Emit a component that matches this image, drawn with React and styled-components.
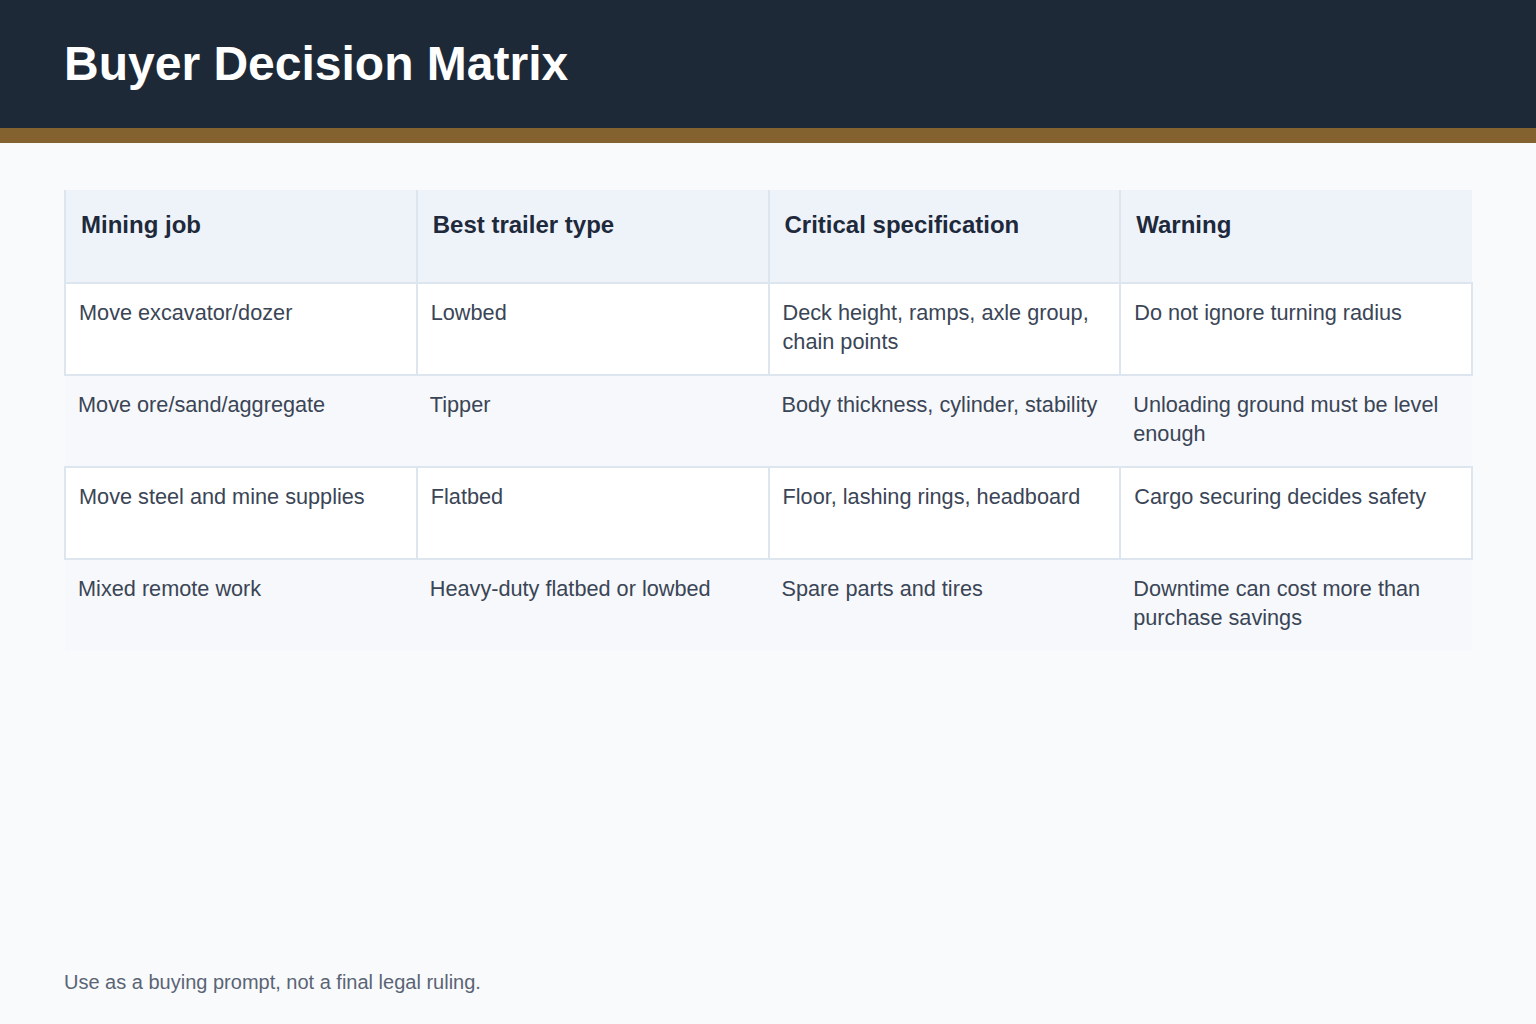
import React from "react";
import styled, { createGlobalStyle } from "styled-components";

const GlobalStyle = createGlobalStyle`
  html, body {
    margin: 0;
    padding: 0;
    background: #f8fafc;
    font-family: "Liberation Sans", Arial, sans-serif;
  }
`;

const Page = styled.div`
  width: 1536px;
  height: 1024px;
  display: flex;
  flex-direction: column;
  background: #f8fafc;
  box-sizing: border-box;
`;

const Header = styled.header`
  height: 128px;
  background: #1e2938;
  display: flex;
  align-items: center;
  padding: 0 64px;
  border-bottom: 15px solid #83622f;
`;

const Title = styled.h1`
  margin: 0;
  font-size: 48px;
  font-weight: 700;
  color: #ffffff;
  line-height: 1;
`;

const Main = styled.main`
  flex: 1;
  display: flex;
  flex-direction: column;
  justify-content: space-between;
  padding: 47px 64px 30px;
`;

const Table = styled.table`
  width: 1409px;
  table-layout: fixed;
  border-collapse: collapse;
`;

const HeadCell = styled.th`
  height: 93px;
  box-sizing: border-box;
  padding: 20px 15px 14px;
  text-align: left;
  vertical-align: top;
  background: #eef3fa;
  border: 2px solid #dde5ef;
  border-top: none;
  color: #1e293b;
  font-size: 24px;
  font-weight: 700;
  line-height: 30px;
  &:last-child {
    border-right: none;
  }
`;

const Row = styled.tr`
  background: ${(p) => (p.$alt ? "#f6f8fb" : "#ffffff")};
`;

const Cell = styled.td`
  height: 92px;
  box-sizing: border-box;
  padding: 14px 13px;
  vertical-align: top;
  color: #3a4556;
  font-size: 21.7px;
  line-height: 29px;
  border: ${(p) => (p.$alt ? "none" : "2px solid #dde5ef")};
`;

const Note = styled.p`
  margin: 0;
  font-size: 20px;
  color: #5b6475;
`;

const columns = ["Mining job", "Best trailer type", "Critical specification", "Warning"];

const rows = [
  ["Move excavator/dozer", "Lowbed", "Deck height, ramps, axle group, chain points", "Do not ignore turning radius"],
  ["Move ore/sand/aggregate", "Tipper", "Body thickness, cylinder, stability", "Unloading ground must be level enough"],
  ["Move steel and mine supplies", "Flatbed", "Floor, lashing rings, headboard", "Cargo securing decides safety"],
  ["Mixed remote work", "Heavy-duty flatbed or lowbed", "Spare parts and tires", "Downtime can cost more than purchase savings"],
];

export default function App() {
  return (
    <>
      <GlobalStyle />
      <Page>
        <Header>
          <Title>Buyer Decision Matrix</Title>
        </Header>
        <Main>
          <Table>
            <thead>
              <tr>
                {columns.map((c) => (
                  <HeadCell key={c}>{c}</HeadCell>
                ))}
              </tr>
            </thead>
            <tbody>
              {rows.map((r, i) => (
                <Row key={r[0]} $alt={i % 2 === 1}>
                  {r.map((v) => (
                    <Cell key={v} $alt={i % 2 === 1}>
                      {v}
                    </Cell>
                  ))}
                </Row>
              ))}
            </tbody>
          </Table>
          <Note>Use as a buying prompt, not a final legal ruling.</Note>
        </Main>
      </Page>
    </>
  );
}
